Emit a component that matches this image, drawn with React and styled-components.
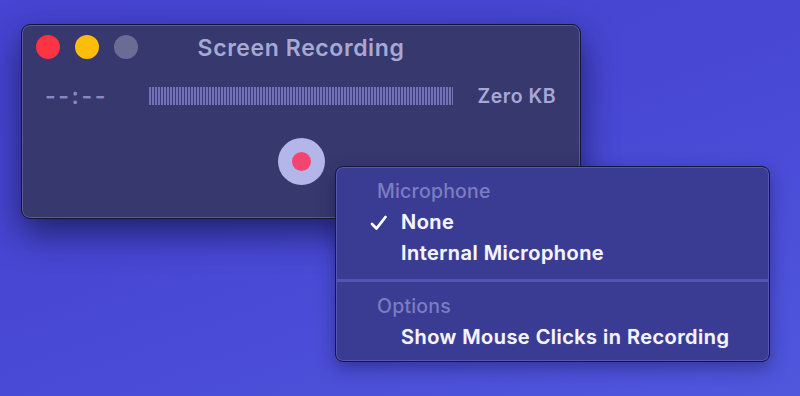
import React from "react";
import styled, { createGlobalStyle } from "styled-components";

const Global = createGlobalStyle`
  html, body { margin: 0; padding: 0; }
  body { font-family: Inter, "Open Sans", "Liberation Sans", sans-serif; }
`;

const Stage = styled.div`
  position: relative;
  width: 800px;
  height: 396px;
  overflow: hidden;
  box-sizing: border-box;
  padding: 24px 0 0 21px;
  background: linear-gradient(160deg, #4644d2 0%, #4747d4 45%, #5057dd 100%);
`;

const Window = styled.div`
  width: 560px;
  height: 195px;
  box-sizing: border-box;
  border-radius: 9px;
  background: #37386e;
  border: 1px solid #15163a;
  box-shadow: inset 0 0 0 1px #5a5b95, 0 14px 34px rgba(20, 20, 70, 0.75);
  display: flex;
  flex-direction: column;
`;

const TitleBar = styled.div`
  position: relative;
  height: 46px;
  display: flex;
  align-items: center;
  justify-content: center;
`;

const Lights = styled.div`
  position: absolute;
  left: 14px;
  top: 10px;
  display: flex;
  gap: 15px;
`;

const Light = styled.span`
  width: 24px;
  height: 24px;
  border-radius: 50%;
  background: ${(p) => p.$color};
`;

const Title = styled.div`
  font-size: 23px;
  font-weight: 600;
  color: #a7a8d4;
  letter-spacing: 0.6px;
`;

const InfoRow = styled.div`
  display: flex;
  align-items: center;
  height: 30px;
  margin-top: 10px;
  padding: 0 24px 0 23px;
`;

const Time = styled.div`
  width: 104px;
  font-size: 23px;
  font-weight: 600;
  color: #8889c2;
  letter-spacing: 2.6px;
`;

const Meter = styled.div`
  width: 304px;
  height: 18px;
  background: repeating-linear-gradient(
    90deg,
    #7072b6 0px,
    #7072b6 2px,
    #3c3d78 2px,
    #3c3d78 3px
  );
`;

const Size = styled.div`
  margin-left: auto;
  font-size: 19.5px;
  font-weight: 600;
  color: #a7a8d8;
  letter-spacing: 0.5px;
`;

const Controls = styled.div`
  flex: 1;
  display: flex;
  justify-content: center;
  padding-top: 27px;
`;

const RecordButton = styled.div`
  width: 47px;
  height: 47px;
  border-radius: 50%;
  background: #b4b6ea;
  display: flex;
  align-items: center;
  justify-content: center;
`;

const RecordDot = styled.span`
  width: 19px;
  height: 19px;
  border-radius: 50%;
  background: #f24670;
`;

const Menu = styled.div`
  position: absolute;
  left: 335px;
  top: 166px;
  width: 435px;
  height: 196px;
  box-sizing: border-box;
  border-radius: 8px;
  background: #3a3b93;
  border: 1px solid #16173e;
  box-shadow: inset 0 0 0 1px #5657b0, 0 6px 18px rgba(20, 20, 70, 0.45);
  padding: 9px 0 0 0;
  display: flex;
  flex-direction: column;
`;

const Section = styled.div`
  display: flex;
  flex-direction: column;
`;

const Header = styled.div`
  height: 31px;
  line-height: 31px;
  padding-left: 41px;
  font-size: 19.5px;
  font-weight: 500;
  color: #7b7dc2;
  letter-spacing: 0.2px;
`;

const Item = styled.div`
  position: relative;
  height: 31px;
  line-height: 31px;
  padding-left: 65px;
  font-size: 20px;
  font-weight: 600;
  color: #f4f4ff;
  letter-spacing: 0.45px;
  text-shadow: 0 0 1px rgba(255, 255, 255, 0.4);
`;

const Check = styled.svg`
  position: absolute;
  left: 34px;
  top: 8px;
`;

const Separator = styled.div`
  height: 3px;
  margin: 10px 1px 9px;
  background: #5254b4;
`;

export default function App() {
  return (
    <>
      <Global />
      <Stage>
        <Window>
          <TitleBar>
            <Lights>
              <Light $color="#fc3444" />
              <Light $color="#fdbd0c" />
              <Light $color="#6b6c95" />
            </Lights>
            <Title>Screen Recording</Title>
          </TitleBar>
          <InfoRow>
            <Time>--:--</Time>
            <Meter />
            <Size>Zero KB</Size>
          </InfoRow>
          <Controls>
            <RecordButton>
              <RecordDot />
            </RecordButton>
          </Controls>
        </Window>
        <Menu>
          <Section>
            <Header>Microphone</Header>
            <Item>
              <Check width="18" height="16" viewBox="0 0 18 16">
                <path
                  d="M2 9 L6.5 13.5 L15.5 2"
                  fill="none"
                  stroke="#ffffff"
                  strokeWidth="2.8"
                  strokeLinecap="round"
                  strokeLinejoin="round"
                />
              </Check>
              None
            </Item>
            <Item>Internal Microphone</Item>
          </Section>
          <Separator />
          <Section>
            <Header>Options</Header>
            <Item>Show Mouse Clicks in Recording</Item>
          </Section>
        </Menu>
      </Stage>
    </>
  );
}
